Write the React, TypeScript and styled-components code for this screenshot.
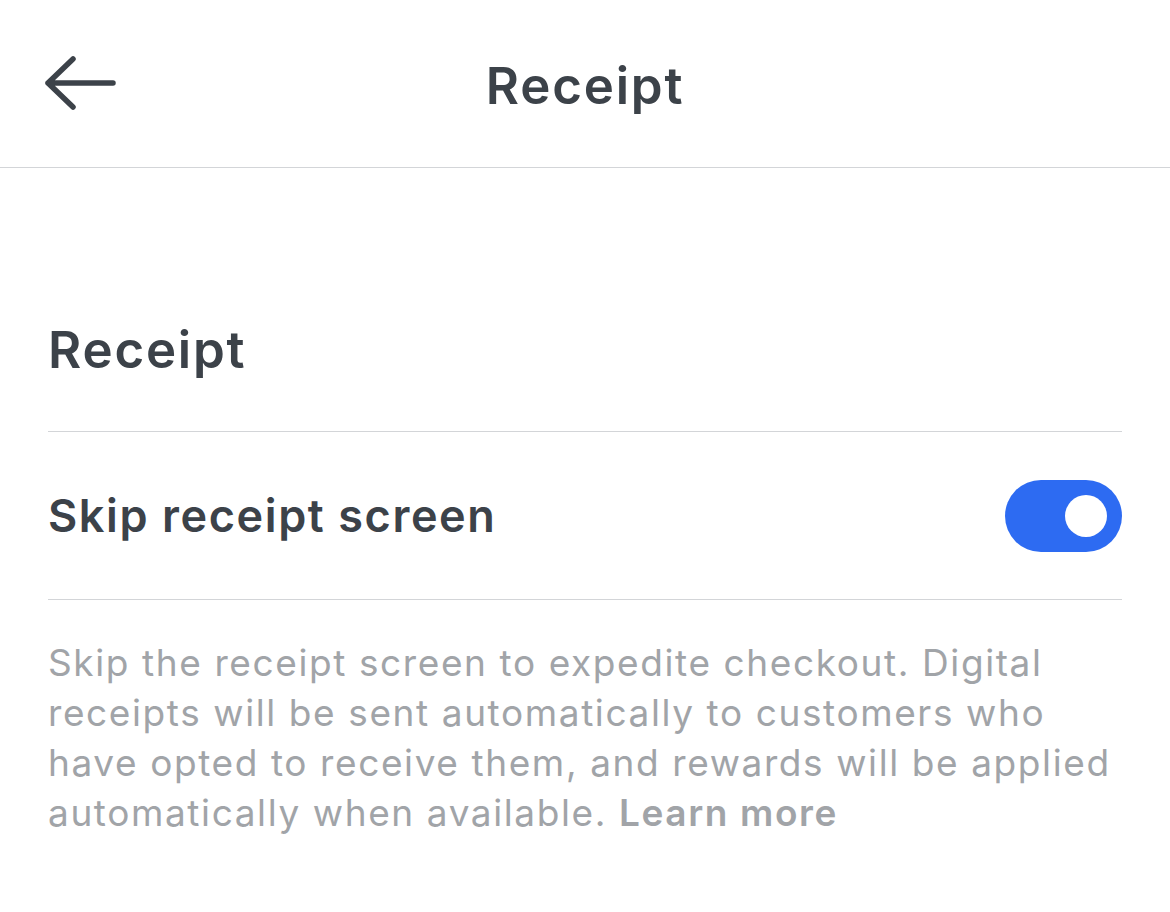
import React from 'react';
import styled, { createGlobalStyle } from 'styled-components';

const Global = createGlobalStyle`
    html, body {
        margin: 0;
        padding: 0;
        background: #ffffff;
    }
    body {
        font-family: Inter, "Noto Sans", sans-serif;
        color: #3c4249;
    }
`

export default function App() {
    return (
        <Page>
            <Global />
            <TopBar>
                <BackButton aria-label="Back">
                    <svg width="72" height="54" viewBox="0 0 72 54" fill="none">
                        <path d="M29 3 L4 27 L29 51 M4 27 H69" stroke="#3c4249" strokeWidth="5.5" strokeLinecap="round" strokeLinejoin="round" />
                    </svg>
                </BackButton>
                <Title>Receipt</Title>
            </TopBar>
            <Content>
                <SectionTitle>Receipt</SectionTitle>
                <Row>
                    <RowLabel>Skip receipt screen</RowLabel>
                    <Toggle on={true} />
                </Row>
                <Help>
                    Skip the receipt screen to expedite checkout. Digital receipts will be sent automatically to customers who have opted to receive them, and rewards will be applied automatically when available. <LearnMore>Learn more</LearnMore>
                </Help>
            </Content>
        </Page>
    )
}

const Page = styled.div`
    width: 100vw;
    min-height: 100vh;
    background: #fff;
`

const TopBar = styled.div`
    height: 167px;
    border-bottom: 1px solid #d3d5d8;
    position: relative;
    display: flex;
    align-items: center;
    justify-content: center;
`

const BackButton = styled.div`
    position: absolute;
    left: 44px;
    top: 56px;
    width: 72px;
    height: 54px;
    display: flex;
`

const Title = styled.div`
    font-size: 51px;
    font-weight: 600;
    letter-spacing: 1.8px;
    color: #3c4249;
    margin-top: 4px;
`

const Content = styled.div`
    padding: 0 48px;
`

const SectionTitle = styled.div`
    font-size: 51px;
    font-weight: 600;
    letter-spacing: 1.8px;
    color: #3c4249;
    height: 264px;
    box-sizing: border-box;
    padding-top: 150px;
    border-bottom: 1px solid #d3d5d8;
    line-height: 64px;
`

const Row = styled.div`
    height: 168px;
    display: flex;
    align-items: center;
    justify-content: space-between;
    border-bottom: 1px solid #d3d5d8;
    box-sizing: border-box;
`

const RowLabel = styled.div`
    font-size: 45px;
    font-weight: 600;
    letter-spacing: 1.6px;
    color: #3c4249;
`

const Toggle = styled.div<{ on: boolean }>`
    width: 117px;
    height: 72px;
    border-radius: 36px;
    background: ${p => (p.on ? '#2d6bf2' : '#d3d5d8')};
    position: relative;
    &::after {
        content: '';
        position: absolute;
        top: 15px;
        left: ${p => (p.on ? '60px' : '15px')};
        width: 42px;
        height: 42px;
        border-radius: 50%;
        background: #fff;
    }
`

const Help = styled.p`
    margin: 0;
    padding-top: 38px;
    font-size: 37px;
    line-height: 50px;
    letter-spacing: 1.6px;
    color: #a1a4a8;
    font-weight: 400;
`

const LearnMore = styled.span`
    font-weight: 600;
    color: #a1a4a8;
`
